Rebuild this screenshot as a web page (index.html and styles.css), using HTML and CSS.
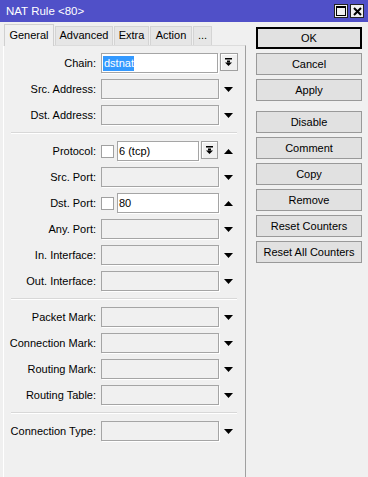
FILE: index.html
```html
<!DOCTYPE html>
<html lang="en">
<head>
    <meta charset="UTF-8">
    <meta name="viewport" content="width=device-width, initial-scale=1.0">
    <title>NAT Rule &lt;80&gt;</title>
    <link rel="stylesheet" href="styles.css">
</head>
<body>
    <div class="window">
        <div class="titlebar">
            <span class="title">NAT Rule &lt;80&gt;</span>
            <div class="title-btns">
                <span class="tbtn">
                    <svg width="10" height="10" viewBox="0 0 10 10"><rect x="0.5" y="0.5" width="9" height="9" fill="none" stroke="#000"/><rect x="0" y="0" width="10" height="2" fill="#000"/></svg>
                </span>
                <span class="tbtn">
                    <svg width="9" height="9" viewBox="0 0 9 9"><path d="M1 1 L8 8 M8 1 L1 8" stroke="#000" stroke-width="2"/></svg>
                </span>
            </div>
        </div>

        <div class="main">
            <div class="left">
                <div class="tabs">
                    <div class="tab active w-general">General</div>
                    <div class="tab w-advanced">Advanced</div>
                    <div class="tab w-extra">Extra</div>
                    <div class="tab w-action">Action</div>
                    <div class="tab w-more">...</div>
                </div>

                <div class="panel">
                    <div class="group">
                        <div class="row">
                            <label>Chain:</label>
                            <div class="ctrl pr1"><div class="field on"><span class="sel">dstnat</span></div></div>
                            <div class="side">
                                <span class="combo"><svg width="7" height="8" viewBox="0 0 7 8"><rect x="0" y="0" width="7" height="1.5" fill="#000"/><rect x="2" y="2.5" width="3" height="2" fill="#000"/><polygon points="0,4.5 7,4.5 3.5,8" fill="#000"/></svg></span>
                            </div>
                        </div>
                        <div class="row">
                            <label>Src. Address:</label>
                            <div class="ctrl"><div class="field"></div></div>
                            <div class="side"><svg class="tri" width="9" height="5" viewBox="0 0 9 5"><polygon points="0,0 9,0 4.5,5" fill="#000"/></svg></div>
                        </div>
                        <div class="row">
                            <label>Dst. Address:</label>
                            <div class="ctrl"><div class="field"></div></div>
                            <div class="side"><svg class="tri" width="9" height="5" viewBox="0 0 9 5"><polygon points="0,0 9,0 4.5,5" fill="#000"/></svg></div>
                        </div>
                    </div>

                    <div class="sep"></div>

                    <div class="group">
                        <div class="row">
                            <label>Protocol:</label>
                            <div class="ctrl">
                                <span class="check"></span>
                                <div class="field on">6 (tcp)</div>
                                <span class="combo small"><svg width="7" height="8" viewBox="0 0 7 8"><rect x="0" y="0" width="7" height="1.5" fill="#000"/><rect x="2" y="2.5" width="3" height="2" fill="#000"/><polygon points="0,4.5 7,4.5 3.5,8" fill="#000"/></svg></span>
                            </div>
                            <div class="side"><svg class="tri" width="9" height="5" viewBox="0 0 9 5"><polygon points="0,5 9,5 4.5,0" fill="#000"/></svg></div>
                        </div>
                        <div class="row">
                            <label>Src. Port:</label>
                            <div class="ctrl"><div class="field"></div></div>
                            <div class="side"><svg class="tri" width="9" height="5" viewBox="0 0 9 5"><polygon points="0,0 9,0 4.5,5" fill="#000"/></svg></div>
                        </div>
                        <div class="row">
                            <label>Dst. Port:</label>
                            <div class="ctrl">
                                <span class="check"></span>
                                <div class="field on">80</div>
                            </div>
                            <div class="side"><svg class="tri" width="9" height="5" viewBox="0 0 9 5"><polygon points="0,5 9,5 4.5,0" fill="#000"/></svg></div>
                        </div>
                        <div class="row">
                            <label>Any. Port:</label>
                            <div class="ctrl"><div class="field"></div></div>
                            <div class="side"><svg class="tri" width="9" height="5" viewBox="0 0 9 5"><polygon points="0,0 9,0 4.5,5" fill="#000"/></svg></div>
                        </div>
                        <div class="row">
                            <label>In. Interface:</label>
                            <div class="ctrl"><div class="field"></div></div>
                            <div class="side"><svg class="tri" width="9" height="5" viewBox="0 0 9 5"><polygon points="0,0 9,0 4.5,5" fill="#000"/></svg></div>
                        </div>
                        <div class="row">
                            <label>Out. Interface:</label>
                            <div class="ctrl"><div class="field"></div></div>
                            <div class="side"><svg class="tri" width="9" height="5" viewBox="0 0 9 5"><polygon points="0,0 9,0 4.5,5" fill="#000"/></svg></div>
                        </div>
                    </div>

                    <div class="sep"></div>

                    <div class="group">
                        <div class="row">
                            <label>Packet Mark:</label>
                            <div class="ctrl"><div class="field"></div></div>
                            <div class="side"><svg class="tri" width="9" height="5" viewBox="0 0 9 5"><polygon points="0,0 9,0 4.5,5" fill="#000"/></svg></div>
                        </div>
                        <div class="row">
                            <label>Connection Mark:</label>
                            <div class="ctrl"><div class="field"></div></div>
                            <div class="side"><svg class="tri" width="9" height="5" viewBox="0 0 9 5"><polygon points="0,0 9,0 4.5,5" fill="#000"/></svg></div>
                        </div>
                        <div class="row">
                            <label>Routing Mark:</label>
                            <div class="ctrl"><div class="field"></div></div>
                            <div class="side"><svg class="tri" width="9" height="5" viewBox="0 0 9 5"><polygon points="0,0 9,0 4.5,5" fill="#000"/></svg></div>
                        </div>
                        <div class="row">
                            <label>Routing Table:</label>
                            <div class="ctrl"><div class="field"></div></div>
                            <div class="side"><svg class="tri" width="9" height="5" viewBox="0 0 9 5"><polygon points="0,0 9,0 4.5,5" fill="#000"/></svg></div>
                        </div>
                    </div>

                    <div class="sep"></div>

                    <div class="group">
                        <div class="row">
                            <label>Connection Type:</label>
                            <div class="ctrl"><div class="field"></div></div>
                            <div class="side"><svg class="tri" width="9" height="5" viewBox="0 0 9 5"><polygon points="0,0 9,0 4.5,5" fill="#000"/></svg></div>
                        </div>
                    </div>
                </div>
            </div>

            <div class="buttons">
                <button class="btn default">OK</button>
                <button class="btn">Cancel</button>
                <button class="btn">Apply</button>
                <button class="btn spaced">Disable</button>
                <button class="btn">Comment</button>
                <button class="btn">Copy</button>
                <button class="btn">Remove</button>
                <button class="btn">Reset Counters</button>
                <button class="btn">Reset All Counters</button>
            </div>
        </div>
    </div>
</body>
</html>
```

FILE: styles.css
```css
body {
    margin: 0;
    font-family: "Liberation Sans", Arial, sans-serif;
    font-size: 11px;
    color: #000;
    background-color: #f0f0f0;
    overflow: hidden;
}

.window {
    width: 368px;
    height: 477px;
    display: flex;
    flex-direction: column;
}

.titlebar {
    height: 22px;
    flex-shrink: 0;
    background-color: #5050c8;
    color: #fff;
    display: flex;
    align-items: center;
    justify-content: space-between;
    padding: 0 4px 0 6px;
}

.title {
    font-size: 11.5px;
}

.title-btns {
    display: flex;
    gap: 2px;
}

.tbtn {
    width: 14px;
    height: 14px;
    box-sizing: border-box;
    border: 1px solid #222;
    background-color: #f0f0f0;
    display: flex;
    align-items: center;
    justify-content: center;
}

.main {
    flex: 1;
    display: flex;
    min-height: 0;
}

.left {
    width: 243px;
    margin-left: 3px;
    padding-top: 2px;
    display: flex;
    flex-direction: column;
}

/* tabs */
.tabs {
    height: 21px;
    display: flex;
    align-items: flex-start;
    gap: 1px;
    padding-left: 1px;
    position: relative;
    z-index: 1;
}

.tab {
    box-sizing: border-box;
    height: 19px;
    margin-top: 2px;
    line-height: 17px;
    text-align: center;
    background-color: #e6e6e6;
    border: 1px solid #d4d4d4;
    border-bottom: none;
}

.tab.active {
    height: 22px;
    margin-top: 0;
    line-height: 20px;
    background-color: #f0f0f0;
    border-color: #d0d0d0;
}

.w-general { width: 50px; }
.w-advanced { width: 58px; }
.w-extra { width: 35px; }
.w-action { width: 42px; }
.w-more { width: 19px; }

.panel {
    flex: 1;
    border-top: 1px solid #dcdcdc;
    border-left: 1px solid #fff;
    border-right: 1px solid #a0a0a0;
    padding-top: 7px;
}

.group {
    display: flex;
    flex-direction: column;
    gap: 6px;
}

.sep {
    margin: 7px 8px 7px 7px;
    border-top: 1px solid #d8d8d8;
    border-bottom: 1px solid #fff;
}

.row {
    display: grid;
    grid-template-columns: 92px 123px 19px;
    height: 20px;
    align-items: center;
}

.row label {
    text-align: right;
    white-space: nowrap;
}

.ctrl {
    margin-left: 5px;
    display: flex;
    align-items: center;
    height: 20px;
}

.ctrl.pr1 {
    padding-right: 1px;
}

.side {
    display: flex;
    align-items: center;
    justify-content: center;
    height: 20px;
}

.field {
    flex: 1;
    height: 20px;
    box-sizing: border-box;
    border: 1px solid #a5a5a5;
    background-color: #f0f0f0;
    box-shadow: 1px 1px 0 #fff;
    padding-left: 1px;
    line-height: 18px;
    white-space: nowrap;
}

.field.on {
    background-color: #fff;
}

.sel {
    background-color: #3399ff;
    color: #fff;
    padding: 1px 0 2px 1px;
}

.check {
    width: 13px;
    height: 13px;
    box-sizing: border-box;
    border: 1px solid #a0a0a0;
    background-color: #fff;
    margin-right: 3px;
    flex-shrink: 0;
}

.combo {
    width: 18px;
    height: 18px;
    align-self: flex-start;
    box-sizing: border-box;
    border: 1px solid #a0a0a0;
    background-color: #f0f0f0;
    box-shadow: inset 1px 1px 0 #fff;
    display: flex;
    align-items: center;
    justify-content: center;
}

.combo.small {
    width: 17px;
    margin-left: 2px;
    margin-right: 1px;
    flex-shrink: 0;
}

/* right column */
.buttons {
    width: 106px;
    margin-left: 10px;
    padding-top: 5px;
    display: flex;
    flex-direction: column;
    gap: 4px;
}

.btn {
    height: 22px;
    box-sizing: border-box;
    margin: 0;
    padding: 0;
    font-family: "Liberation Sans", Arial, sans-serif;
    font-size: 11px;
    color: #000;
    background-color: #e1e1e1;
    border: 1px solid #999;
}

.btn.default {
    border: 1px solid #000;
    box-shadow: inset 0 0 0 1px #000;
}

.btn.spaced {
    margin-top: 6px;
}
```
